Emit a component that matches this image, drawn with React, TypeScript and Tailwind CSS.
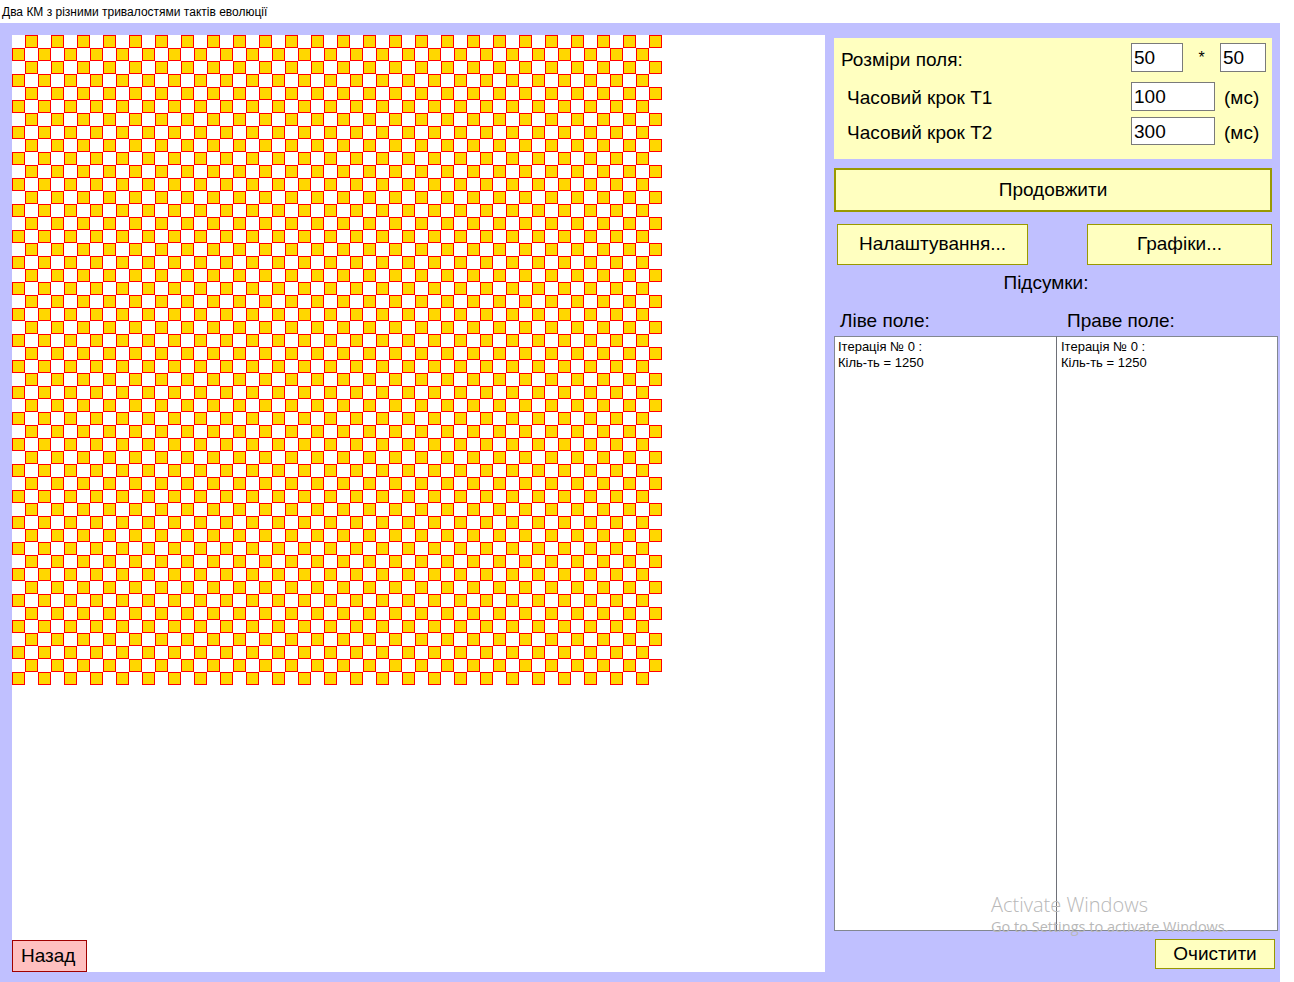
import React from 'react';

const N = 50;

function Field() {
  const cells = [];
  for (let r = 0; r < N; r++) {
    for (let c = 0; c < N; c++) {
      const alive = (r + c) % 2 === 1;
      cells.push(
        <div
          key={r * N + c}
          className={alive ? 'w-[13px] h-[13px] bg-[#FFD700] border border-[#FF0000]' : 'w-[13px] h-[13px]'}
        />
      );
    }
  }
  return <div className="grid grid-cols-[repeat(50,13px)] w-[650px]">{cells}</div>;
}

function Box({ value, w }: { value: string; w: string }) {
  return (
    <div className={`${w} h-full bg-white border border-[#7A7A7A] pl-[2px] flex items-center text-[19px] leading-none text-black`}>
      {value}
    </div>
  );
}

export default function App() {
  return (
    <div className="w-[1294px] h-[982px] bg-white flex flex-col overflow-hidden" style={{ fontFamily: '"Liberation Sans", Arial, sans-serif' }}>
      {/* Title */}
      <div className="h-[23px] flex items-center pl-[2px] text-[12px] text-black">
        Два КМ з різними тривалостями тактів еволюції
      </div>

      <div className="relative w-[1280px] flex-1 bg-[#C0C0FF] flex pl-[12px] pt-[12px]">
        {/* Canvas */}
        <div className="w-[813px] h-[937px] bg-white flex flex-col justify-between">
          <Field />
          <button className="w-[75px] h-[32px] bg-[#FFC0C0] border border-[#A00000] text-[19px] text-black text-left pl-[8px]">
            Назад
          </button>
        </div>

        {/* Right panel */}
        <div className="ml-[9px] mt-[3px] w-[444px] flex flex-col text-black">
          <div className="w-[438px] h-[121px] bg-[#FFFFC0] flex flex-col text-[19px]">
            <div className="mt-[5px] h-[29px] flex items-center">
              <div className="w-[297px] pl-[7px] pt-[5px]">Розміри поля:</div>
              <Box value="50" w="w-[52px]" />
              <div className="w-[37px] text-center text-[16px]">*</div>
              <Box value="50" w="w-[46px]" />
            </div>
            <div className="mt-[10px] h-[29px] flex items-center">
              <div className="w-[297px] pl-[13px] pt-[4px]">Часовий крок T1</div>
              <Box value="100" w="w-[84px]" />
              <div className="ml-[9px] pt-[4px]">(мс)</div>
            </div>
            <div className="mt-[6px] h-[28px] flex items-center">
              <div className="w-[297px] pl-[13px] pt-[4px]">Часовий крок T2</div>
              <Box value="300" w="w-[84px]" />
              <div className="ml-[9px] pt-[4px]">(мс)</div>
            </div>
          </div>

          <button className="mt-[9px] w-[438px] h-[44px] bg-[#FFFFC0] border-2 border-[#999900] text-[19px]">
            Продовжити
          </button>

          <div className="mt-[12px] h-[41px] flex pl-[3px]">
            <button className="w-[191px] h-full bg-[#FFFFC0] border border-[#999900] text-[19px]">
              Налаштування...
            </button>
            <button className="ml-[59px] w-[185px] h-full bg-[#FFFFC0] border border-[#999900] text-[19px]">
              Графіки...
            </button>
          </div>

          <div className="mt-[7px] h-[21px] leading-[21px] text-[19px] text-center w-[424px]">Підсумки:</div>

          <div className="mt-[17px] h-[21px] leading-[21px] text-[19px] flex">
            <div className="w-[223px] pl-[6px]">Ліве поле:</div>
            <div className="pl-[10px]">Праве поле:</div>
          </div>

          <div className="mt-[5px] h-[595px] flex text-[13px] leading-[16px]">
            <div className="w-[223px] h-full bg-white border border-[#828790] pl-[3px] pt-[2px]">
              <div>Ітерація № 0 :</div>
              <div>Кіль-ть = 1250</div>
            </div>
            <div className="-ml-px w-[222px] h-full bg-white border border-[#828790] border-l-[#6E7078] pl-[4px] pt-[2px]">
              <div>Ітерація № 0 :</div>
              <div>Кіль-ть = 1250</div>
            </div>
          </div>

          <div className="mt-[8px] flex justify-end pr-[3px]">
            <button className="w-[120px] h-[30px] bg-[#FFFFC0] border border-[#999900] text-[19px]">
              Очистити
            </button>
          </div>
        </div>

        {/* Activation watermark */}
        <div className="absolute left-[991px] top-[869px] text-[#B8B8B8] pointer-events-none" style={{ fontFamily: '"Open Sans", "Noto Sans", sans-serif' }}>
          <div className="text-[20px] leading-[25px] font-light">Activate Windows</div>
          <div className="text-[14.5px] leading-[18px] mt-[1px]">Go to Settings to activate Windows.</div>
        </div>
      </div>
    </div>
  );
}
